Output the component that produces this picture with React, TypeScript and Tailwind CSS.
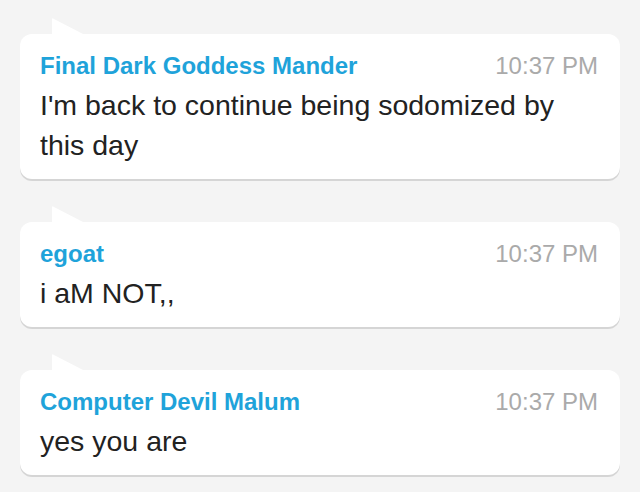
type Message = {
  id: number;
  author: string;
  time: string;
  text: string;
};

const MESSAGES: Message[] = [
  { id: 1, author: 'Final Dark Goddess Mander', time: '10:37 PM', text: "I'm back to continue being sodomized by this day" },
  { id: 2, author: 'egoat', time: '10:37 PM', text: 'i aM NOT,,' },
  { id: 3, author: 'Computer Devil Malum', time: '10:37 PM', text: 'yes you are' },
];

function Bubble({ msg }: { msg: Message }) {
  return (
    <div className="relative bg-white rounded-[12px] shadow-[0_2px_0_#d5d5d5] pt-[18px] pb-[14px] pl-[20px] pr-[22px]">
      {/* tail */}
      <svg className="absolute left-[32px] -top-[16px]" width="34" height="17" viewBox="0 0 34 17">
        <path d="M0 17 L0 1 Q0 0 1 0.5 L33 17 Z" fill="#ffffff" />
      </svg>
      <div className="flex items-baseline justify-between h-[28px] leading-[28px]">
        <span className="text-[24px] font-bold text-[#1fa3da]">{msg.author}</span>
        <span className="text-[24px] text-[#aaaaaa]">{msg.time}</span>
      </div>
      <p className="mt-[5px] text-[28.5px] leading-[40px] text-[#222222]">{msg.text}</p>
    </div>
  );
}

export default function App() {
  return (
    <div
      className="w-[640px] h-[492px] bg-[#f4f4f4] overflow-hidden px-[20px] pt-[34px] flex flex-col gap-[43px]"
      style={{ fontFamily: '"Liberation Sans", Arial, sans-serif' }}
    >
      {MESSAGES.map(m => (
        <Bubble key={m.id} msg={m} />
      ))}
    </div>
  );
}
